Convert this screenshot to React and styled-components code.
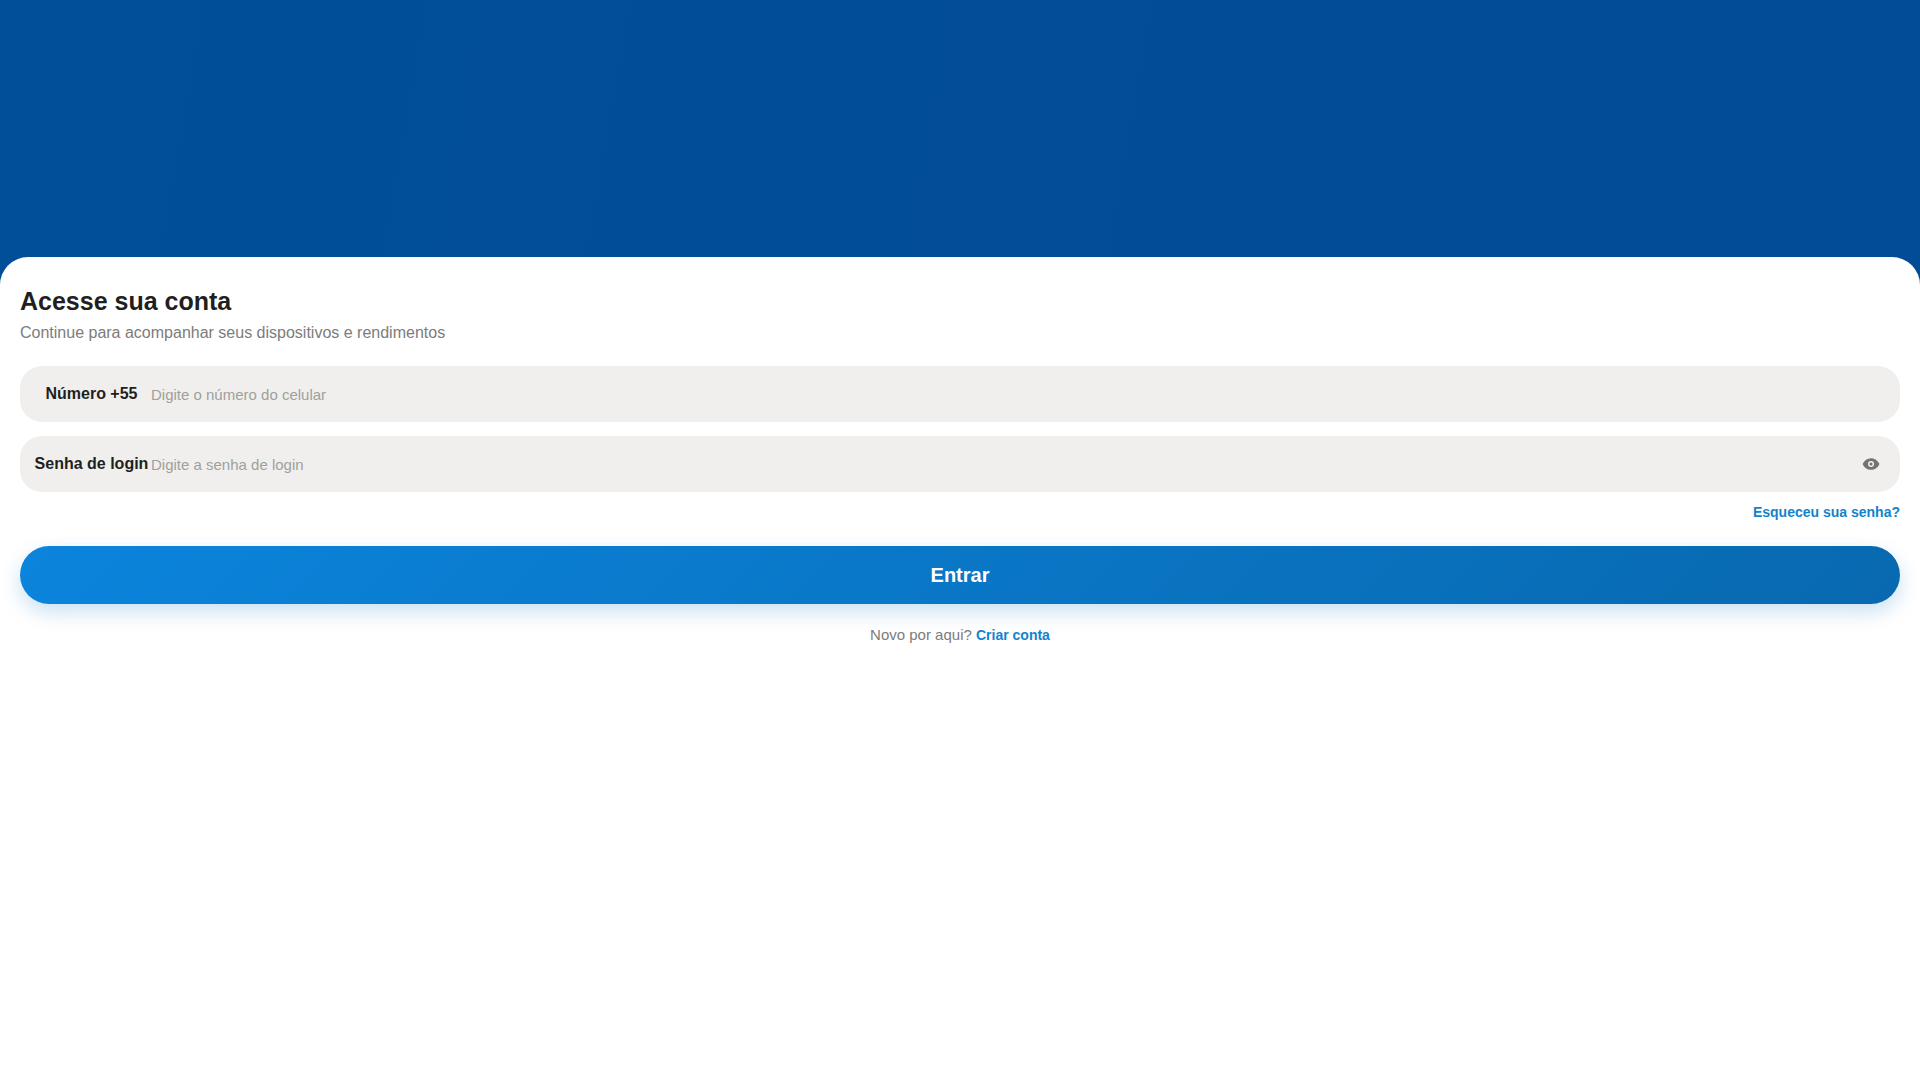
import React, { useState } from 'react';
import styled, { createGlobalStyle } from 'styled-components';

const GlobalStyle = createGlobalStyle`
  *, *::before, *::after {
    box-sizing: border-box;
  }

  body {
    margin: 0;
    background: #ffffff;
    font-family: 'Liberation Sans', Arial, sans-serif;
    color: #1f1f1f;
  }
`;

const Page = styled.main`
  display: flex;
  flex-direction: column;
  min-height: 100vh;
  background: linear-gradient(100deg, #014f99 0%, #024d97 40%, #024b97 100%);
`;

const Hero = styled.div`
  height: 257px;
`;

const Card = styled.section`
  flex: 1;
  padding: 28px 20px;
  border-radius: 28px 28px 0 0;
  background: #ffffff;
`;

const Title = styled.h1`
  margin: 0;
  font-size: 25px;
  line-height: 32px;
  font-weight: 700;
`;

const Subtitle = styled.p`
  margin: 4px 0 0;
  font-size: 16px;
  line-height: 24px;
  color: #7c7c7c;
`;

const Form = styled.form`
  display: flex;
  flex-direction: column;
  margin-top: 21px;
`;

const Field = styled.div`
  display: flex;
  align-items: center;
  height: 56px;
  margin-bottom: 14px;
  padding: 0 20px 0 12px;
  border-radius: 22px;
  background: #f0efed;
`;

const Label = styled.label`
  flex: none;
  width: 119px;
  font-size: 16px;
  line-height: 20px;
  font-weight: 700;
  text-align: center;
  white-space: nowrap;
`;

const Input = styled.input`
  flex: 1;
  min-width: 0;
  height: 100%;
  padding: 0;
  border: 0;
  outline: 0;
  background: transparent;
  font-family: inherit;
  font-size: 15px;
  color: #1f1f1f;

  &::placeholder {
    color: #a09f9c;
  }
`;

const EyeButton = styled.button`
  display: flex;
  padding: 0;
  border: 0;
  background: transparent;
  color: #77736c;
  cursor: pointer;
`;

const TextLink = styled.a`
  font-size: 14px;
  line-height: 16px;
  font-weight: 700;
  color: #1283cc;
  text-decoration: none;
`;

const ForgotLink = styled(TextLink)`
  align-self: flex-end;
  margin: -2px 0 26px;
`;

const SubmitButton = styled.button`
  height: 58px;
  border: 0;
  border-radius: 29px;
  background: linear-gradient(135deg, #0b84dc 0%, #0869b0 100%);
  box-shadow: 0 8px 20px rgba(11, 120, 200, 0.22);
  font-family: inherit;
  font-size: 20px;
  font-weight: 700;
  color: #ffffff;
  cursor: pointer;
`;

const SignUp = styled.p`
  margin: 22px 0 0;
  font-size: 15px;
  line-height: 18px;
  text-align: center;
  color: #7c7c7c;
`;

const EyeIcon = () => (
  <svg width="18" height="18" viewBox="0 0 18 18" fill="none" aria-hidden="true">
    <path
      d="M9 3.2c-3.7 0-6.8 2.2-8.4 5.8C2.2 12.6 5.3 14.8 9 14.8s6.8-2.2 8.4-5.8C15.8 5.4 12.7 3.2 9 3.2z"
      fill="currentColor"
    />
    <circle cx="9" cy="9" r="2.3" stroke="#f0efed" strokeWidth="1.5" />
  </svg>
);

export default function App() {
  const [visible, setVisible] = useState(false);

  return (
    <>
      <GlobalStyle />
      <Page>
        <Hero />
        <Card>
          <Title>Acesse sua conta</Title>
          <Subtitle>Continue para acompanhar seus dispositivos e rendimentos</Subtitle>
          <Form onSubmit={(e) => e.preventDefault()}>
            <Field>
              <Label htmlFor="phone">Número +55</Label>
              <Input id="phone" type="tel" placeholder="Digite o número do celular" />
            </Field>
            <Field>
              <Label htmlFor="password">Senha de login</Label>
              <Input
                id="password"
                type={visible ? 'text' : 'password'}
                placeholder="Digite a senha de login"
              />
              <EyeButton type="button" aria-label="Mostrar senha" onClick={() => setVisible(!visible)}>
                <EyeIcon />
              </EyeButton>
            </Field>
            <ForgotLink href="#recuperar">Esqueceu sua senha?</ForgotLink>
            <SubmitButton type="submit">Entrar</SubmitButton>
          </Form>
          <SignUp>
            Novo por aqui? <TextLink href="#cadastro">Criar conta</TextLink>
          </SignUp>
        </Card>
      </Page>
    </>
  );
}
